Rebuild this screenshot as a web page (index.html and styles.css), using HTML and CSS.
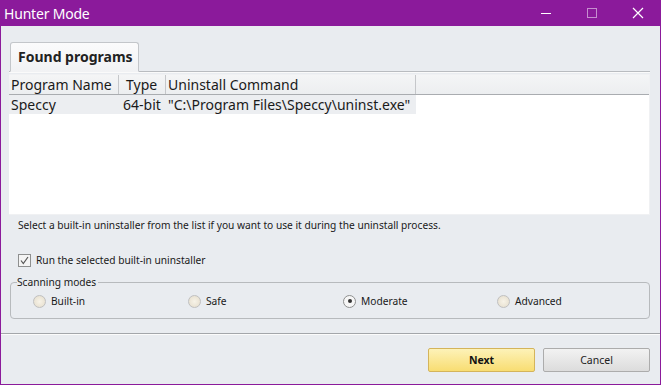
FILE: index.html
```html
<!DOCTYPE html>
<html lang="en">
  <head>
    <meta charset="UTF-8" />
    <title>Hunter Mode</title>
    <link rel="stylesheet" href="styles.css">
  </head>
  <body>
    <div class="window">
      <header class="titlebar">
        <span class="title">Hunter Mode</span>
        <div class="controls">
          <span class="ctl">
            <svg width="12" height="12" viewBox="0 0 12 12"><path d="M1 6.5h10" stroke="#fff" stroke-width="1"/></svg>
          </span>
          <span class="ctl">
            <svg width="12" height="12" viewBox="0 0 12 12"><rect x="1.5" y="1.5" width="9" height="9" fill="none" stroke="#c68ecf" stroke-width="1"/></svg>
          </span>
          <span class="ctl">
            <svg width="12" height="12" viewBox="0 0 12 12"><path d="M1 1l10 10M11 1L1 11" stroke="#fff" stroke-width="1.2"/></svg>
          </span>
        </div>
      </header>

      <main class="content">
        <div class="tabs">
          <div class="tab">Found programs</div>
        </div>

        <div class="list">
          <div class="list-head">
            <div class="col c-name">Program Name</div>
            <div class="col c-type">Type</div>
            <div class="col c-cmd">Uninstall Command</div>
            <div class="col c-rest"></div>
          </div>
          <div class="list-row">
            <div class="cell c-name">Speccy</div>
            <div class="cell c-type">64-bit</div>
            <div class="cell c-cmd">"C:\Program Files\Speccy\uninst.exe"</div>
          </div>
        </div>

        <p class="hint">Select a built-in uninstaller from the list if you want to use it during the uninstall process.</p>

        <label class="check">
          <span class="box">
            <svg width="9" height="9" viewBox="0 0 9 9"><path d="M1 4.5l2.3 3L8 1" fill="none" stroke="#555" stroke-width="1.2"/></svg>
          </span>
          Run the selected built-in uninstaller
        </label>

        <fieldset class="modes">
          <legend>Scanning modes</legend>
          <label class="radio"><span class="dot"></span>Built-in</label>
          <label class="radio"><span class="dot"></span>Safe</label>
          <label class="radio"><span class="dot on"></span>Moderate</label>
          <label class="radio"><span class="dot"></span>Advanced</label>
        </fieldset>
      </main>

      <footer class="footer">
        <button class="btn btn-next">Next</button>
        <button class="btn btn-cancel">Cancel</button>
      </footer>
    </div>
  </body>
</html>
```

FILE: styles.css
```css
html, body {
  margin: 0;
  padding: 0;
}
body {
  width: 661px;
  height: 385px;
  overflow: hidden;
  font-family: "Noto Sans", "Open Sans", Arial, sans-serif;
  color: #1a1a1a;
}
.window {
  width: 661px;
  height: 385px;
  box-sizing: border-box;
  background: #e9ecf0;
  border: 1px solid #8b1a9b;
  border-top: none;
  display: flex;
  flex-direction: column;
}
.titlebar {
  height: 26px;
  background: #8b1a9b;
  display: flex;
  align-items: center;
  justify-content: space-between;
  margin: 0 -1px;
  padding-left: 4px;
}
.title {
  color: #fff;
  font-size: 14px;
  letter-spacing: -0.2px;
}
.controls {
  display: flex;
  height: 100%;
}
.ctl {
  width: 46px;
  display: flex;
  align-items: center;
  justify-content: center;
}
.content {
  padding: 16px 10px 0 8px;
  display: flex;
  flex-direction: column;
}
.tabs {
  display: flex;
  border-bottom: 1px solid #b9bcc0;
  padding-left: 1px;
  box-shadow: 0 1px 0 #fafafa;
}
.tab {
  height: 28px;
  padding: 0 5px 0 7px;
  margin-bottom: -1px;
  background: linear-gradient(#fbfbfc, #f1f2f4);
  border: 1px solid #c3c6ca;
  border-bottom: 1px solid #f1f2f4;
  border-radius: 3px 3px 0 0;
  font-weight: 700;
  font-size: 14px;
  line-height: 28px;
  color: #222;
}
.list {
  margin-top: 2px;
  height: 139px;
  background: #fff;
  border: 1px solid #f0f1f3;
  border-left: none;
}
.list-head {
  display: flex;
  height: 19px;
  background: linear-gradient(#f4f5f6, #eceef0);
  border-bottom: 1px solid #a9acb0;
  font-size: 14px;
  line-height: 19px;
}
.col {
  border-right: 1px solid #c5c7ca;
  box-sizing: border-box;
  padding-left: 2px;
  white-space: nowrap;
}
.c-name { width: 110px; }
.c-type { width: 47px; padding-left: 7px; }
.c-cmd  { width: 250px; padding-left: 2px; }
.c-rest { border-right: none; flex: 1; }
.list-row {
  display: flex;
  width: 407px;
  height: 19px;
  background: #eceef1;
  font-size: 14px;
  line-height: 19px;
}
.cell {
  box-sizing: border-box;
  padding-left: 2px;
  white-space: nowrap;
}
.list-row .c-type { padding-left: 4px; }
.hint {
  margin: 3px 0 0 9px;
  font-size: 10.2px;
  line-height: 14px;
  color: #1a1a1a;
}
.check {
  margin: 21px 0 0 9px;
  display: flex;
  align-items: center;
  gap: 5px;
  font-size: 10.2px;
  line-height: 14px;
}
.box {
  width: 11px;
  height: 11px;
  border: 1px solid #8e8f8f;
  background: #f4f4f4;
  display: flex;
  align-items: center;
  justify-content: center;
}
.modes {
  margin: 8px 0 0 1px;
  padding: 5px 0 10px 22px;
  border: 1px solid #b7babd;
  border-radius: 4px;
  display: grid;
  grid-template-columns: 155px 155px 154px 1fr;
  align-items: center;
  font-size: 10.2px;
  line-height: 14px;
}
.modes legend {
  padding: 0 2px 0 0;
  margin-left: -16px;
  font-size: 10.2px;
}
.radio {
  display: flex;
  align-items: center;
  gap: 5px;
}
.dot {
  width: 11px;
  height: 11px;
  border-radius: 50%;
  border: 1px solid #c0c0c0;
  background: radial-gradient(#f7f3e8, #e4dccb);
  display: flex;
  align-items: center;
  justify-content: center;
}
.dot.on {
  background: #f6f6f6;
  border-color: #8e8f8f;
}
.dot.on::after {
  content: "";
  width: 4px;
  height: 4px;
  border-radius: 50%;
  background: #333;
}
.footer {
  flex: 1;
  margin-top: 14px;
  border-top: 1px solid #a3a6aa;
  box-shadow: inset 0 1px 0 #fbfbfb;
  display: flex;
  justify-content: flex-end;
  align-items: flex-start;
  gap: 8px;
  padding: 14px 10px 0 0;
}
.btn {
  width: 107px;
  height: 24px;
  font-family: "Noto Sans", Arial, sans-serif;
  font-size: 10.5px;
  border-radius: 2px;
  padding: 0;
  cursor: pointer;
}
.btn-next {
  font-weight: 700;
  background: linear-gradient(#fdf2b8, #f8dd72);
  border: 1px solid #d4b45b;
  color: #111;
}
.btn-cancel {
  background: linear-gradient(#f2f2f2, #dcdcdc);
  border: 1px solid #acacac;
  color: #222;
}
```
